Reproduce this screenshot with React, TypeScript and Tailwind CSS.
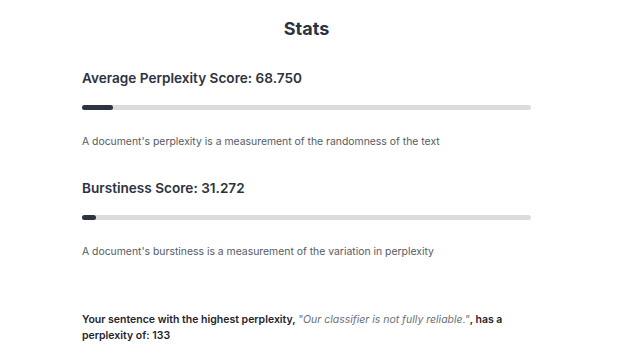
import React from 'react';

const stats = [
  {
    label: 'Average Perplexity Score',
    value: '68.750',
    fill: 31,
    note: "A document's perplexity is a measurement of the randomness of the text",
  },
  {
    label: 'Burstiness Score',
    value: '31.272',
    fill: 14,
    note: "A document's burstiness is a measurement of the variation in perplexity",
  },
];

const App: React.FC = () => {
  return (
    <div className="min-h-[359px] bg-white font-['Inter',sans-serif] text-[#2d3340]">
      <div className="ml-[82px] w-[449px] pt-[18px]">
        <h1 className="text-center text-[18px] font-bold leading-[22px]">Stats</h1>

        {stats.map((s, i) => (
          <div key={s.label} className={i === 0 ? 'mt-[29px]' : 'mt-[30px]'}>
            <h2 className="text-[13.6px] font-semibold leading-[18px]">
              {s.label}: {s.value}
            </h2>
            <div className="mt-[18px] h-[5px] w-full rounded-full bg-[#dcdcdc]">
              <div className="h-full rounded-full bg-[#2d3340]" style={{ width: `${s.fill}px` }} />
            </div>
            <p className="mt-[25px] text-[10.4px] leading-[14px] text-[#555a63]">{s.note}</p>
          </div>
        ))}

        <p className="mt-[53px] text-[10.5px] font-semibold leading-[16px] text-[#1f242c]">
          Your sentence with the highest perplexity,{' '}
          <span className="font-normal italic text-[#6b7079]">"Our classifier is not fully reliable."</span>, has a
          perplexity of: 133
        </p>
      </div>
    </div>
  );
};

export default App;
